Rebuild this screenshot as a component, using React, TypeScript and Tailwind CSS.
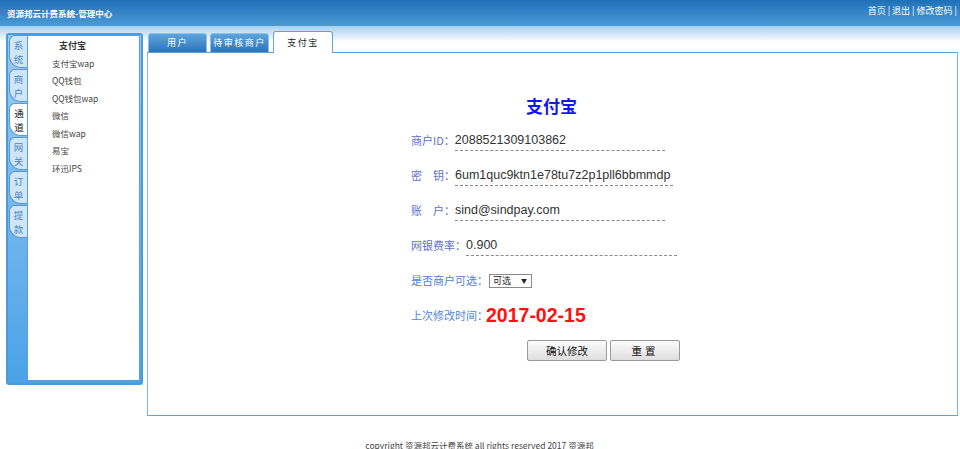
import React from "react";

const cjk = "font-['Noto_Sans_CJK_SC','Liberation_Sans',sans-serif]";

function SideTab({ top, bottom, active }: { top: string; bottom: string; active?: boolean }) {
  return (
    <div
      className={`h-[33px] w-[18px] ml-[1px] flex flex-col items-center justify-center text-[9.5px] rounded-tl-[6px] rounded-bl-[12px] border-l border-y ${
        active
          ? "bg-white border-[#5a9bd0] text-[#111] w-[19px]"
          : "bg-[#cfe6f8] border-[#5b97cc] text-[#4d85bd]"
      }`}
    >
      <span className="leading-[14px]">{top}</span>
      <span className="leading-[14px]">{bottom}</span>
    </div>
  );
}

function TopTab({ label, active }: { label: string; active?: boolean }) {
  if (active)
    return (
      <div className="h-[22px] w-[60px] -mb-[1px] relative z-10 bg-white border border-b-0 border-[#5fa3d9] rounded-t-[3px] flex items-center justify-center text-[9px] tracking-[1.5px] text-[#222]">
        {label}
      </div>
    );
  return (
    <div className="h-[19px] w-[59px] bg-linear-to-b from-[#5ea5dd] to-[#2b74b9] border border-b-0 border-[#8cc0e8] rounded-t-[3px] flex items-center justify-center text-[9px] tracking-[1.5px] text-white">
      {label}
    </div>
  );
}

function Row({ label, value, width, color = "text-[#5f6fcb]" }: { label: string; value: string; width: string; color?: string }) {
  return (
    <div className="h-[35px] flex items-center pt-[3px]">
      <span className={`text-[11px] ${color} pb-[3px] border-b border-transparent`}>{label}</span>
      <span
        className={`${width} font-['Liberation_Sans',sans-serif] text-[12.5px] leading-[15px] text-[#333] pb-[2px] border-b border-dashed border-[#8a8a8a] whitespace-nowrap`}
      >
        {value}
      </span>
    </div>
  );
}

export default function App() {
  const menu = ["支付宝wap", "QQ钱包", "QQ钱包wap", "微信", "微信wap", "易宝", "环迅IPS"];
  return (
    <div className={`w-[960px] h-[449px] overflow-hidden bg-white ${cjk}`}>
      {/* header */}
      <div className="h-[26px] bg-linear-to-b from-[#1e70b6] to-[#4b9bd8] flex items-center justify-between px-[7px]">
        <span className="text-white font-bold text-[8.5px]">资源邦云计费系统-管理中心</span>
        <span className="text-white text-[9px] -mt-[5px] -mr-[4px]">首页 | 退出 | 修改密码 |</span>
      </div>

      <div className="bg-[linear-gradient(#a6d0f1,#ffffff_16px)] flex pl-[6px] pt-[7px]">
        {/* left panel */}
        <div className="w-[137px] h-[352px] rounded-[3px] border-2 border-[#4b9bd9] bg-linear-to-b from-[#9acbf1] to-[#4aa2e8] flex">
          <div className="w-[19px] flex flex-col gap-[1px]">
            <SideTab top="系" bottom="统" />
            <SideTab top="商" bottom="户" />
            <SideTab top="通" bottom="道" active />
            <SideTab top="网" bottom="关" />
            <SideTab top="订" bottom="单" />
            <SideTab top="提" bottom="款" />
          </div>
          <div className="flex-1 bg-white border border-[#5aa0d8] mr-[1px] mb-[2px] pt-[1px]">
            <div className="ml-[31px] leading-[17.5px] text-[9px] font-bold text-[#333]">支付宝</div>
            {menu.map((m) => (
              <div key={m} className="ml-[24px] leading-[17.5px] text-[8.5px] text-[#444]">
                {m}
              </div>
            ))}
          </div>
        </div>

        {/* right column */}
        <div className="ml-[4px] -mt-[3px] flex flex-col">
          <div className="h-[22px] flex items-end ml-[1px]">
            <TopTab label="用户" />
            <div className="w-[3px]" />
            <TopTab label="待审核商户" />
            <div className="w-[4px]" />
            <TopTab label="支付宝" active />
          </div>
          <div className="w-[811px] h-[364px] border border-[#7fb2de] border-t-[#5aa2d8] border-b-[#6b9dcb] bg-white pt-[35px]">
            <div className="h-[35px] flex items-center justify-center text-[17px] font-bold text-[#1515f0] pr-[2px]">
              支付宝
            </div>
            <div className="ml-[263px] flex flex-col">
              <Row label="商户ID：" value="2088521309103862" width="w-[210px]" />
              <Row label="密　钥：" value="6um1quc9ktn1e78tu7z2p1pll6bbmmdp" width="w-[218px]" />
              <Row label="账　户：" value="sind@sindpay.com" width="w-[210px]" />
              <Row label="网银费率：" value="0.900" width="w-[211px]" />
              <div className="h-[35px] flex items-center">
                <span className="text-[11px] text-[#4f80d6]">是否商户可选：</span>
                <div className="ml-[1px] w-[43px] h-[14px] border border-[#8a8a8a] bg-white flex items-center justify-between pl-[3px] pr-[4px] text-[9px] text-[#222]">
                  <span>可选</span>
                  <span className="text-[6px]">▼</span>
                </div>
              </div>
              <div className="h-[35px] flex items-center">
                <span className="text-[11px] text-[#4f86d8]">上次修改时间：</span>
                <span className="-ml-[2px] font-['Liberation_Sans',sans-serif] font-bold text-[19.5px] text-[#ff1010]">2017-02-15</span>
              </div>
              <div className="h-[35px] flex items-center gap-[3px] pl-[116px]">
                <button className="w-[80px] h-[21px] border border-[#9a9a9a] rounded-[2px] bg-linear-to-b from-[#fdfdfd] to-[#dedede] text-[10.5px] text-[#111]">
                  确认修改
                </button>
                <button className="w-[70px] h-[21px] border border-[#9a9a9a] rounded-[2px] bg-linear-to-b from-[#fdfdfd] to-[#dedede] text-[10.5px] text-[#111] tracking-[3px]">
                  重置
                </button>
              </div>
            </div>
          </div>
        </div>
      </div>

      <div className="mt-[23px] text-center text-[8.5px] text-[#444] pr-[1px]">
        copyright 资源邦云计费系统 all rights reserved 2017 资源邦
      </div>
    </div>
  );
}
